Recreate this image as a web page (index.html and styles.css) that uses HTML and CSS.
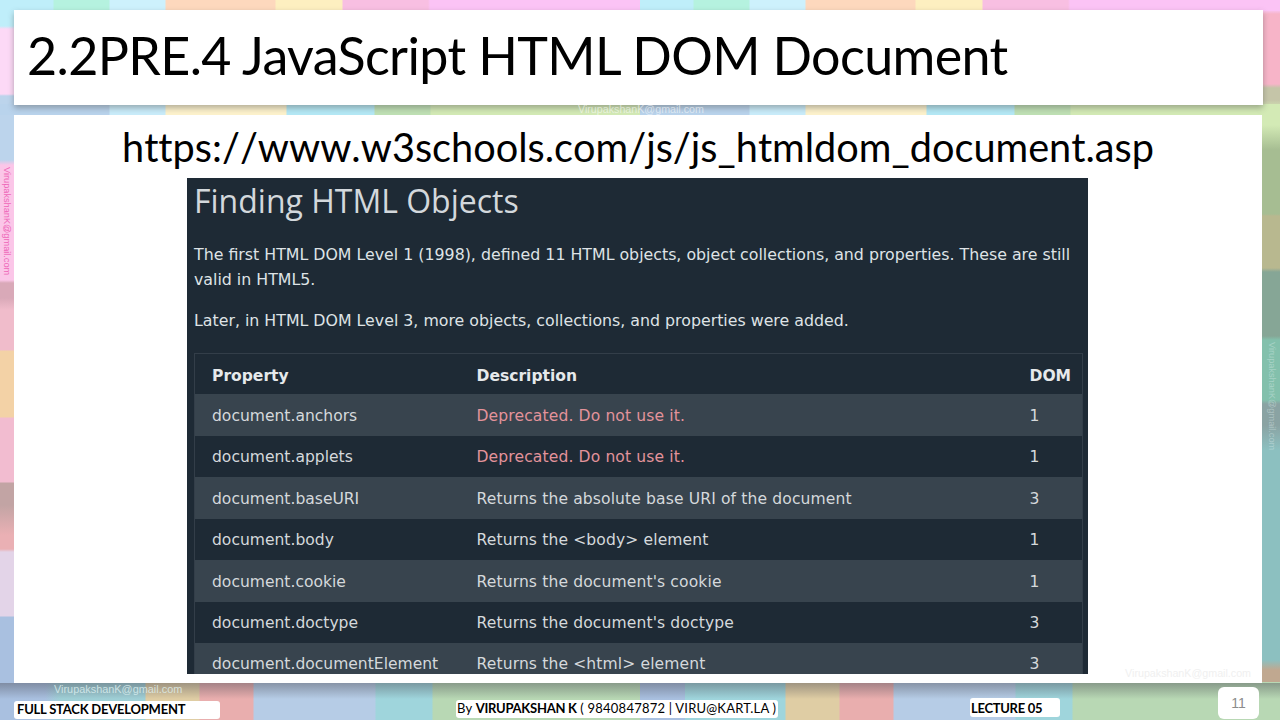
FILE: index.html
```html
<!DOCTYPE html>
<html lang="en">
<head>
<meta charset="utf-8">
<title>2.2PRE.4 JavaScript HTML DOM Document</title>
<link rel="stylesheet" href="styles.css">
</head>
<body>
<div class="slide">
  <header class="title-bar"><h1>2.2PRE.4 JavaScript HTML DOM Document</h1></header>
  <span class="mark mark-top">VirupakshanK@gmail.com</span>
  <span class="mark mark-left">VirupakshanK@gmail.com</span>
  <span class="mark mark-right">VirupakshanK@gmail.com</span>
  <span class="mark mark-bottom">VirupakshanK@gmail.com</span>
  <main class="content">
    <p class="url">https://www.w3schools.com/js/js_htmldom_document.asp</p>
    <section class="shot">
      <h2>Finding HTML Objects</h2>
      <p class="lead">The first HTML DOM Level 1 (1998), defined 11 HTML objects, object collections, and properties. These are still valid in HTML5.</p>
      <p class="lead lead-2">Later, in HTML DOM Level 3, more objects, collections, and properties were added.</p>
      <table>
        <thead>
          <tr><th class="c1">Property</th><th class="c2">Description</th><th class="c3">DOM</th></tr>
        </thead>
        <tbody>
          <tr class="h42"><td>document.anchors</td><td class="desc bad">Deprecated. Do not use it.</td><td>1</td></tr>
          <tr class="h41"><td>document.applets</td><td class="desc bad">Deprecated. Do not use it.</td><td>1</td></tr>
          <tr class="h42"><td>document.baseURI</td><td class="desc">Returns the absolute base URI of the document</td><td>3</td></tr>
          <tr class="h41"><td>document.body</td><td class="desc">Returns the &lt;body&gt; element</td><td>1</td></tr>
          <tr class="h42"><td>document.cookie</td><td class="desc">Returns the document's cookie</td><td>1</td></tr>
          <tr class="h41"><td>document.doctype</td><td class="desc">Returns the document's doctype</td><td>3</td></tr>
          <tr class="h42"><td>document.documentElement</td><td class="desc">Returns the &lt;html&gt; element</td><td>3</td></tr>
        </tbody>
      </table>
    </section>
    <span class="mark mark-inner">VirupakshanK@gmail.com</span>
  </main>
  <footer class="foot">
    <div class="tag tag-course">FULL STACK DEVELOPMENT</div>
    <div class="tag tag-author">By <b>VIRUPAKSHAN K</b> ( 9840847872 | VIRU@KART.LA )</div>
    <div class="tag tag-lecture">LECTURE 05</div>
    <div class="page-no">11</div>
  </footer>
</div>
</body>
</html>
```
FILE: styles.css
```css
* { box-sizing: border-box; }
html, body { margin: 0; padding: 0; }
body { width: 1280px; height: 720px; overflow: hidden; background: #fff; }

.slide {
  position: relative;
  width: 1280px;
  height: 720px;
  overflow: hidden;
  padding: 10px 17px 0 14px;
  display: flex;
  flex-direction: column;
  background-repeat: no-repeat;
  background-image:
    /* soft shade under the content card */
    linear-gradient(180deg, rgba(70, 70, 80, .42), rgba(70, 70, 80, 0) 16px),
    /* top strip */
    linear-gradient(90deg,
      #bfeefa 0 53px, #b5f2df 54px 109px, #cdf1fc 110px 165px, #fdd8bd 166px 275px,
      #fdefc0 276px 342px, #f8bfe2 343px 428px, #fbc3f5 430px 640px,
      #bfeefa 640px 693px, #b5f2df 694px 749px, #cdf1fc 750px 805px, #fdd8bd 806px 915px,
      #fdefc0 916px 982px, #f8bfe2 983px 1068px, #fbc3f5 1070px 1280px),
    /* strip between the title and the content */
    linear-gradient(90deg,
      #b9d3ec 0 109px, #c9ecfa 110px 165px, #fdf2cc 166px 286px, #b4e8f5 287px 374px,
      #bfe0b4 375px 430px, #d3eab5 431px 640px,
      #b9d3ec 640px 749px, #c9ecfa 750px 805px, #fdf2cc 806px 926px, #b4e8f5 927px 1014px,
      #bfe0b4 1015px 1070px, #d3eab5 1071px 1280px),
    /* footer strip */
    linear-gradient(90deg,
      #a9c0e0 0 45px, #9fcfd6 60px 145px, #dfcda4 146px 199px, #e9aeae 200px 253px, #b6cce6 254px 375px,
      #9fd5dc 376px 432px, #b8d8b4 433px 640px,
      #a9c0e0 640px 685px, #9fd5dc 685px 785px, #dfcda4 786px 839px, #e9aeae 840px 893px, #b6cce6 894px 1015px,
      #9fd5dc 1016px 1072px, #b8d8b4 1073px 1280px),
    /* left column */
    linear-gradient(180deg,
      #bfeefa 0 26px, #fcd9f6 29px 94px, #bcd4ec 96px 160px, #fbc6e8 165px 280px, #d9a9b8 283px 298px, #f0bccb 310px 350px,
      #f3d2a6 351px 417px, #f2bcd0 418px 482px, #c2a4a4 483px 505px, #eab0b4 535px 549px,
      #e3d4e8 552px 616px, #a9c0e0 617px 720px),
    /* right column */
    linear-gradient(180deg,
      #f9c6f3 0 10px, #f7b4c8 14px 84px, #c5c5a8 88px 100px, #d3eab5 110px 125px, #a6bd92 150px 214px,
      #b8b88f 216px 268px, #86a696 272px 336px, #83c0ac 340px 400px, #8aa3a3 404px 425px, #8cc0c0 450px 660px,
      #c0a890 670px 684px, #b8d8b4 686px 720px);
  background-size: 100% 18px, 100% 11px, 100% 11px, 100% 38px, 14px 100%, 18px 100%;
  background-position: 0 683px, 0 0, 0 104px, 0 682px, 0 0, 100% 0;
}

/* Title */
.title-bar {
  position: relative;
  z-index: 1;
  flex: none;
  width: 1249px;
  height: 95px;
  background: #fff;
  display: flex;
  align-items: center;
  padding-left: 13px;
  box-shadow: 0 3px 6px rgba(70, 70, 70, .4);
}
h1 {
  margin: 0;
  font: 400 52px/1 "Lato", "Liberation Sans", sans-serif;
  font-variant-ligatures: none;
  letter-spacing: -.62px;
  color: #000;
  position: relative;
  top: -3px;
}

/* Body card */
.content {
  position: relative;
  flex: none;
  width: 1248px;
  height: 568px;
  margin-top: 10px;
  background: #fff;
  display: flex;
  flex-direction: column;
  align-items: center;
}
.url {
  margin: 0;
  height: 63px;
  padding-top: 8px;
  font: 400 39.7px/48px "Lato", "Liberation Sans", sans-serif;
  font-variant-ligatures: none;
  font-kerning: none;
  color: #000;
  white-space: nowrap;
}

/* Embedded screenshot */
.shot {
  flex: none;
  width: 901px;
  height: 496px;
  margin-left: -1px;
  background: #1e2a35;
  color: #dfe3e6;
  overflow: hidden;
  padding: 0 6px 0 7px;
  font-family: "DejaVu Sans", "Liberation Sans", sans-serif;
}
.shot h2 {
  margin: 0;
  padding-top: 2px;
  font: 400 32px/42px "Open Sans", "Liberation Sans", sans-serif;
  color: #d3d8dc;
}
.lead {
  margin: 20px 0 0;
  font-size: 15.8px;
  line-height: 25px;
}
.lead-2 { margin-top: 16px; }

table {
  width: 888px;
  margin-top: 20px;
  border-collapse: collapse;
  table-layout: fixed;
  border: 1px solid #333e49;
  font-size: 15.55px;
}
th, td {
  padding: 2px 0 0 17px;
  text-align: left;
  white-space: nowrap;
}
th { height: 40px; padding-top: 4px; font-weight: 700; color: #e6e9eb; }
.c1 { width: 265px; }
.c2 { width: 553px; }
.c3 { width: 70px; }
td { color: #d5d9dc; }
td.desc { letter-spacing: .13px; }
td.bad { color: #e3939b; }
.h42 { height: 42px; background: #38444e; }
.h41 { height: 41px; background: #1e2a35; }

/* Footer */
.foot {
  flex: 1;
  position: relative;
  display: flex;
  align-items: flex-end;
  font-family: "Lato", "Liberation Sans", sans-serif;
  color: #000;
}
.tag {
  background: #fff;
  border-radius: 3px;
  font-size: 13px;
  line-height: 17px;
  white-space: nowrap;
  padding-left: 3px;
}
.tag-course { width: 206px; height: 18px; margin-bottom: 1px; font-weight: 700; letter-spacing: -.22px; }
.tag-author { width: 322px; height: 18px; margin: 0 192px 2px 236px; padding-left: 1px; letter-spacing: .22px; }
.tag-author b { letter-spacing: -.25px; }
.tag-lecture { width: 90px; height: 19px; margin-bottom: 3px; font-weight: 700; padding-left: 1px; letter-spacing: -.3px; line-height: 20px; }
.page-no {
  width: 41px;
  height: 32px;
  margin: 0 0 1px 158px;
  background: #fff;
  border-radius: 6px;
  color: #8c8c8c;
  font: 400 14px/32px "Liberation Sans", sans-serif;
  text-align: center;
}

/* Watermarks */
.mark {
  position: absolute;
  font: 400 10.7px/13px "Liberation Sans", sans-serif;
  white-space: nowrap;
}
.mark-top { z-index: 2; left: 578px; top: 103px; color: rgba(255, 255, 255, .55); }
.mark-bottom { z-index: 2; left: 54px; top: 683px; font-size: 10.9px; color: rgba(225, 245, 245, .75); }
.mark-inner { right: 11px; top: 552px; color: #f0f0f0; }
.mark-left { left: 1px; top: 167px; font-size: 9.2px; line-height: 12px; writing-mode: vertical-rl; color: #ee66b8; }
.mark-right { left: 1266px; top: 342px; font-size: 9.2px; line-height: 12px; writing-mode: vertical-rl; color: rgba(225, 240, 240, .4); }
```
